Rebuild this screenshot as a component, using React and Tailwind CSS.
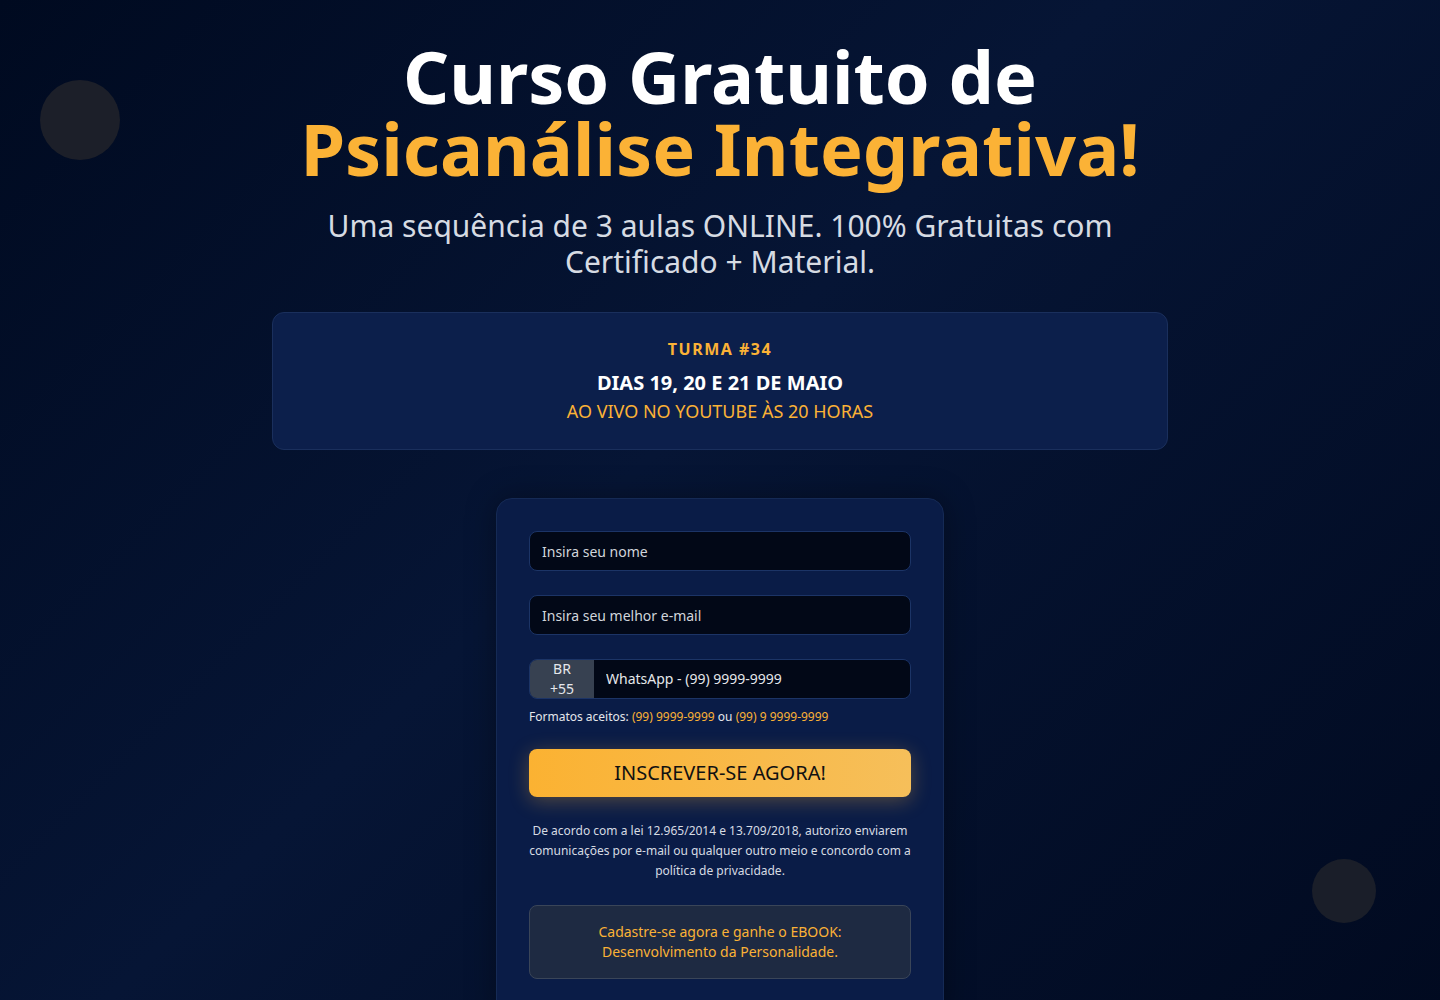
import React from 'react';

const font = { fontFamily: '"Noto Sans", "Open Sans", sans-serif' };

const Field = ({ placeholder }) => (
  <input
    type="text"
    placeholder={placeholder}
    className="w-full h-[40px] rounded-lg bg-[#020817] border border-[#1c3466] px-3 text-sm text-white placeholder:text-[#d1d5db] outline-none"
  />
);

const App = () => {
  return (
    <div
      style={font}
      className="relative min-h-screen w-full overflow-hidden bg-[linear-gradient(135deg,#000a20_0%,#061535_45%,#010a20_100%)] text-white"
    >
      {/* decorative dots */}
      <div className="absolute left-[40px] top-[80px] w-[80px] h-[80px] rounded-full bg-[#1c1f29]" />
      <div className="absolute left-[1312px] top-[859px] w-[64px] h-[64px] rounded-full bg-[#1a1e29]" />

      <div className="relative flex flex-col items-center pt-[40px]">
        <h1 className="text-center font-bold text-[72px] leading-[72px]">
          <span className="block text-white">Curso Gratuito de</span>
          <span className="block text-[#fbb236]">Psicanálise Integrativa!</span>
        </h1>

        <p className="mt-[24px] max-w-[800px] text-center text-[30px] leading-[36px] text-[#d6dbe3]">
          Uma sequência de 3 aulas ONLINE. 100% Gratuitas com Certificado + Material.
        </p>

        <div className="mt-[32px] w-[896px] h-[138px] rounded-xl border border-[#1a2f5c] bg-[#0c1f4b] flex flex-col items-center pt-[24px]">
          <div className="text-base font-bold tracking-[1.5px] text-[#fbb236] leading-6">TURMA #34</div>
          <div className="mt-[10px] text-xl font-bold text-white leading-6">DIAS 19, 20 E 21 DE MAIO</div>
          <div className="mt-[4px] text-lg text-[#fbb236] leading-6">AO VIVO NO YOUTUBE ÀS 20 HORAS</div>
        </div>

        <div className="mt-[48px] w-[448px] rounded-2xl border border-[#152a55] bg-[#0a1c47] px-[32px] pt-[32px] pb-[40px] shadow-[0_0_30px_rgba(0,0,0,0.35)]">
          <Field placeholder="Insira seu nome" />
          <div className="mt-[24px]">
            <Field placeholder="Insira seu melhor e-mail" />
          </div>
          <div className="mt-[24px] flex h-[40px] rounded-lg border border-[#1c3466] overflow-hidden">
            <div className="w-[64px] shrink-0 bg-[#374151] flex flex-col items-center justify-center text-sm leading-5 text-[#e5e7eb]">
              <span>BR</span>
              <span>+55</span>
            </div>
            <input
              type="text"
              placeholder="WhatsApp - (99) 9999-9999"
              className="flex-1 min-w-0 bg-[#020817] px-3 text-sm text-white placeholder:text-[#e5e7eb] outline-none"
            />
          </div>
          <p className="mt-[10px] text-xs text-[#e5e7eb] leading-4">
            Formatos aceitos: <span className="text-[#fbb236]">(99) 9999-9999</span> ou{' '}
            <span className="text-[#fbb236]">(99) 9 9999-9999</span>
          </p>

          <button className="mt-[24px] w-full h-[48px] rounded-lg bg-[linear-gradient(90deg,#fbb232,#f6bf5a)] text-xl text-[#111111] shadow-[0_4px_20px_rgba(251,178,54,0.3)]">
            INSCREVER-SE AGORA!
          </button>

          <p className="mt-[24px] text-center text-xs leading-[20px] text-[#d6dbe3]">
            De acordo com a lei 12.965/2014 e 13.709/2018, autorizo enviarem comunicações por e-mail ou qualquer outro meio e concordo com a política de privacidade.
          </p>

          <div className="mt-[24px] rounded-lg border border-[#3a4558] bg-[#1e2a42] px-6 py-[16px] text-center text-sm leading-[20px] text-[#fbb236]">
            Cadastre-se agora e ganhe o EBOOK:
            <br />
            Desenvolvimento da Personalidade.
          </div>
        </div>
      </div>
    </div>
  );
};

export default App;
